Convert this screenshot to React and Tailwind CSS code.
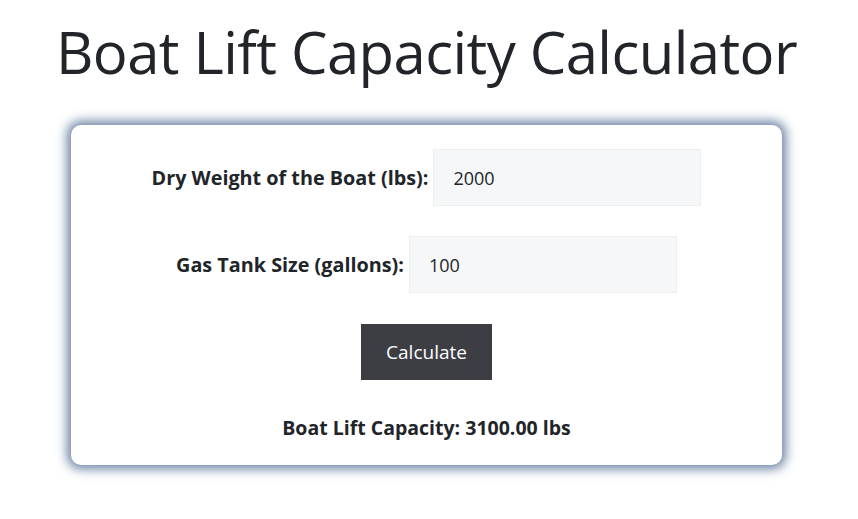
export default function App() {
  return (
    <div
      className="min-h-[519px] w-[853px] bg-white text-[#212529] flex flex-col items-center"
      style={{ fontFamily: '"Open Sans", "Noto Sans", sans-serif' }}
    >
      <h1 className="mt-[12px] text-[58px] leading-[80px] font-normal tracking-[-0.55px]">
        Boat Lift Capacity Calculator
      </h1>
      <div className="mt-[33px] w-[711px] h-[340px] rounded-[10px] bg-white shadow-[0_0_11px_4px_rgba(70,100,140,0.8)] flex flex-col items-center pt-[24px]">
        <div className="flex items-center gap-[5px]">
          <label className="text-[19.8px] font-bold">Dry Weight of the Boat (lbs):</label>
          <input
            defaultValue="2000"
            className="w-[268px] h-[57px] bg-[#f6f7f8] border border-[#eceef0] px-[19px] text-[18px] text-[#212529] outline-none"
          />
        </div>
        <div className="mt-[30px] flex items-center gap-[5px]">
          <label className="text-[19.8px] font-bold">Gas Tank Size (gallons):</label>
          <input
            defaultValue="100"
            className="w-[268px] h-[57px] bg-[#f6f7f8] border border-[#eceef0] px-[19px] text-[18px] text-[#212529] outline-none"
          />
        </div>
        <button className="mt-[31px] w-[131px] h-[56px] bg-[#3d3e44] text-white text-[19px]">
          Calculate
        </button>
        <div className="mt-[33px] text-[19.5px] font-bold">Boat Lift Capacity: 3100.00 lbs</div>
      </div>
    </div>
  );
}
